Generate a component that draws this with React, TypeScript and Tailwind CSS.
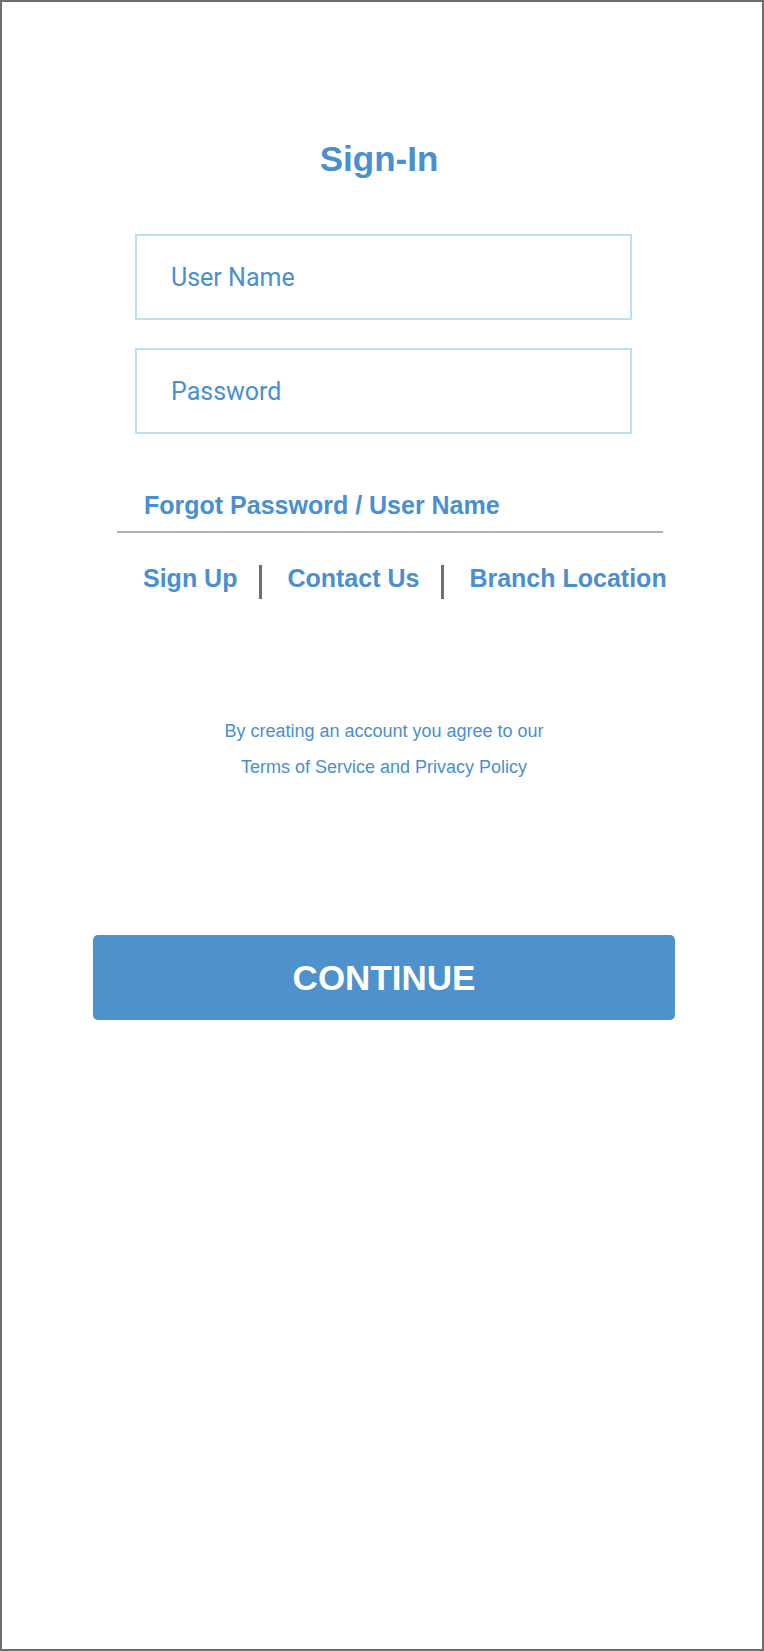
const linkClass = "text-[25px] leading-none font-bold text-[#4a8fd0] whitespace-nowrap";

const Field = ({ placeholder, type }: { placeholder: string; type: string }) => {
    return (
        <input
            type={type}
            placeholder={placeholder}
            className="ml-[133px] w-[497px] h-[86px] border-2 border-[#bddff6] pl-[34px] outline-none font-['Roboto',sans-serif] text-[25px] text-[#4a8fd0] placeholder:text-[#4a8fd0] bg-white"
        />
    );
};

const App = () => {
    return (
        <div className="w-[764px] h-[1651px] border-2 border-[#6e6e6e] bg-white font-['Liberation_Sans',Arial,sans-serif] flex flex-col items-start">
            <h1 className="w-full text-center pr-[6px] mt-[139px] text-[35px] leading-[35px] font-bold text-[#4a8fd0]">Sign-In</h1>

            <div className="mt-[58px] flex flex-col gap-[28px]">
                <Field placeholder="User Name" type="text" />
                <Field placeholder="Password" type="password" />
            </div>

            <div className={`${linkClass} ml-[142px] mt-[59px]`}>Forgot Password / User Name</div>
            <div className="ml-[115px] mt-[13px] w-[546px] h-[2px] bg-[#b2b2b2]"></div>

            <div className="ml-[141px] mt-[32px] flex items-start">
                <span className={`${linkClass} pt-[1px]`}>Sign Up</span>
                <span className="ml-[22px] mr-[25px] w-[3px] h-[34px] bg-[#6f6f6f]"></span>
                <span className={`${linkClass} pt-[1px]`}>Contact Us</span>
                <span className="ml-[22px] mr-[25px] w-[3px] h-[34px] bg-[#6f6f6f]"></span>
                <span className={`${linkClass} pt-[1px]`}>Branch Location</span>
            </div>

            <div className="w-full mt-[114px] pl-[4px] text-center text-[18px] leading-[36px] text-[#4a8fd0]">
                <p>By creating an account you agree to our</p>
                <p>Terms of Service and Privacy Policy</p>
            </div>

            <button className="ml-[91px] mt-[150px] w-[582px] h-[85px] rounded-[5px] bg-[#4d91cd] text-white text-[35px] font-bold leading-none cursor-pointer">
                CONTINUE
            </button>
        </div>
    );
};

export default App;
